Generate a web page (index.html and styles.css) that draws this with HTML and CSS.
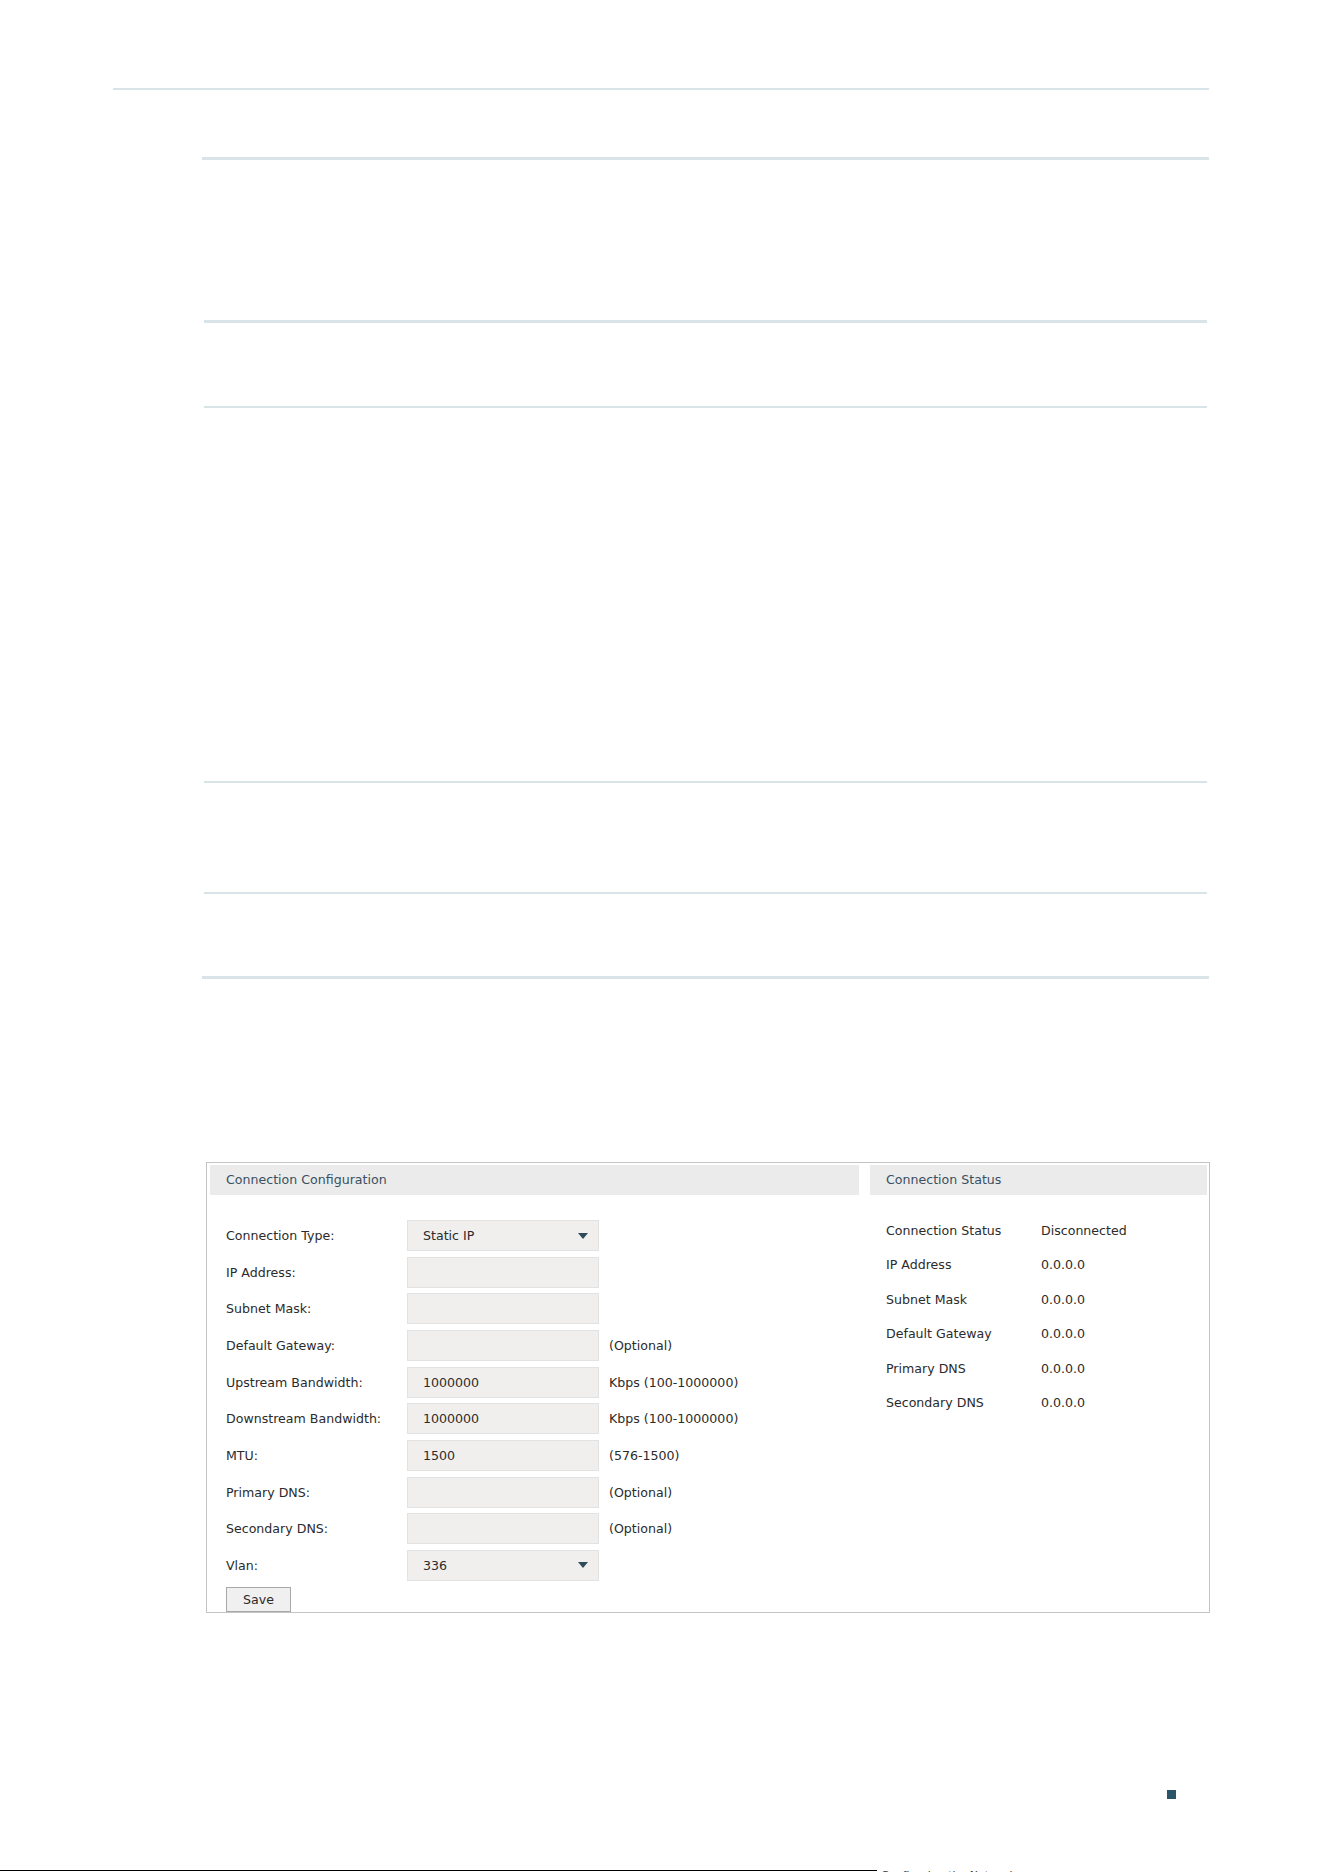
FILE: index.html
```html
<!DOCTYPE html>
<html lang="en">
<head>
<meta charset="utf-8">
<title>Connection Configuration</title>
<link rel="stylesheet" href="styles.css">
</head>
<body>
<div class="page">
  <div class="rule rule-a"></div>
  <div class="rule rule-b"></div>
  <div class="rule rule-c"></div>
  <div class="rule rule-d"></div>
  <div class="rule rule-e"></div>
  <div class="rule rule-f"></div>
  <div class="rule rule-g"></div>

  <div class="panel">
    <section class="col col-config">
      <div class="col-head">Connection Configuration</div>
      <div class="form">
        <div class="row"><span class="lbl">Connection Type:</span><div class="field"><span>Static IP</span><span class="caret"></span></div></div>
        <div class="row"><span class="lbl">IP Address:</span><div class="field"></div></div>
        <div class="row"><span class="lbl">Subnet Mask:</span><div class="field"></div></div>
        <div class="row"><span class="lbl">Default Gateway:</span><div class="field"></div><span class="hint">(Optional)</span></div>
        <div class="row"><span class="lbl">Upstream Bandwidth:</span><div class="field"><span>1000000</span></div><span class="hint">Kbps (100-1000000)</span></div>
        <div class="row"><span class="lbl">Downstream Bandwidth:</span><div class="field"><span>1000000</span></div><span class="hint">Kbps (100-1000000)</span></div>
        <div class="row"><span class="lbl">MTU:</span><div class="field"><span>1500</span></div><span class="hint">(576-1500)</span></div>
        <div class="row"><span class="lbl">Primary DNS:</span><div class="field"></div><span class="hint">(Optional)</span></div>
        <div class="row"><span class="lbl">Secondary DNS:</span><div class="field"></div><span class="hint">(Optional)</span></div>
        <div class="row"><span class="lbl">Vlan:</span><div class="field"><span>336</span><span class="caret"></span></div></div>
        <button class="btn" type="button">Save</button>
      </div>
    </section>
    <section class="col col-status">
      <div class="col-head">Connection Status</div>
      <div class="status">
        <div class="srow"><span class="sk">Connection Status</span><span>Disconnected</span></div>
        <div class="srow"><span class="sk">IP Address</span><span>0.0.0.0</span></div>
        <div class="srow"><span class="sk">Subnet Mask</span><span>0.0.0.0</span></div>
        <div class="srow"><span class="sk">Default Gateway</span><span>0.0.0.0</span></div>
        <div class="srow"><span class="sk">Primary DNS</span><span>0.0.0.0</span></div>
        <div class="srow"><span class="sk">Secondary DNS</span><span>0.0.0.0</span></div>
      </div>
    </section>
  </div>

  <div class="footer"><span class="mark"></span></div>
  <div class="bottom"><span class="bline"></span><span class="btext">Configuring the Network</span></div>
</div>
</body>
</html>
```

FILE: styles.css
```css
html, body {
  margin: 0;
  padding: 0;
  background: #ffffff;
}

body {
  font-family: "DejaVu Sans", Verdana, sans-serif;
  font-size: 12.6px;
  color: #2b2b2b;
}

.page {
  width: 1324px;
  height: 1872px;
  overflow: hidden;
}

.rule {
  background: #d9e4e9;
}

.rule-a { margin: 88px 0 0 113px; width: 1096px; height: 2px; }
.rule-b { margin: 67px 0 0 202px; width: 1007px; height: 3px; }
.rule-c { margin: 160px 0 0 204px; width: 1003px; height: 3px; }
.rule-d { margin: 83px 0 0 204px; width: 1003px; height: 2px; }
.rule-e { margin: 373px 0 0 204px; width: 1003px; height: 2px; }
.rule-f { margin: 109px 0 0 204px; width: 1003px; height: 2px; }
.rule-g { margin: 82px 0 0 202px; width: 1007px; height: 3px; }

.panel {
  margin: 183px 0 0 206px;
  width: 1004px;
  height: 451px;
  box-sizing: border-box;
  border: 1px solid #c4c4c4;
  padding: 2px 2px 0 3px;
  display: flex;
  gap: 11px;
}

.col-config { width: 649px; }
.col-status { width: 337px; }

.col-head {
  height: 30px;
  box-sizing: border-box;
  padding-bottom: 2px;
  background: #ebebeb;
  color: #3a5062;
  padding-left: 16px;
  display: flex;
  align-items: center;
}

.form {
  margin-top: 25px;
  padding-left: 16px;
  display: flex;
  flex-direction: column;
  gap: 5.67px;
}

.row {
  display: flex;
  align-items: center;
  height: 31px;
}

.lbl {
  width: 181px;
}

.field {
  width: 192px;
  height: 31px;
  box-sizing: border-box;
  background: #f0efee;
  border: 1px solid #e2e2e2;
  padding: 0 10px 0 15px;
  display: flex;
  align-items: center;
  justify-content: space-between;
}

.caret {
  width: 0;
  height: 0;
  border-left: 5px solid transparent;
  border-right: 5px solid transparent;
  border-top: 6px solid #2e4a5b;
}

.hint {
  margin-left: 10px;
}

.btn {
  align-self: flex-start;
  width: 65px;
  height: 25px;
  margin: 0;
  padding: 0;
  background: #f0f0f0;
  border: 1px solid #a8a8a8;
  font-family: "DejaVu Sans", Verdana, sans-serif;
  font-size: 12.6px;
  color: #2b2b2b;
}

.status {
  margin-top: 18px;
  padding-left: 16px;
}

.srow {
  display: flex;
  align-items: center;
  height: 34.5px;
}

.sk {
  width: 155px;
}

.footer {
  margin-top: 177px;
  padding-left: 1167px;
  height: 9px;
}

.mark {
  display: block;
  width: 9px;
  height: 9px;
  background: #2c5469;
}

.bottom {
  margin-top: 71px;
  display: flex;
  align-items: flex-start;
}

.bline {
  width: 877px;
  height: 1px;
  background: #000000;
}

.btext {
  margin-left: 4px;
  font-size: 11px;
  line-height: 1;
  color: #333333;
}
```
